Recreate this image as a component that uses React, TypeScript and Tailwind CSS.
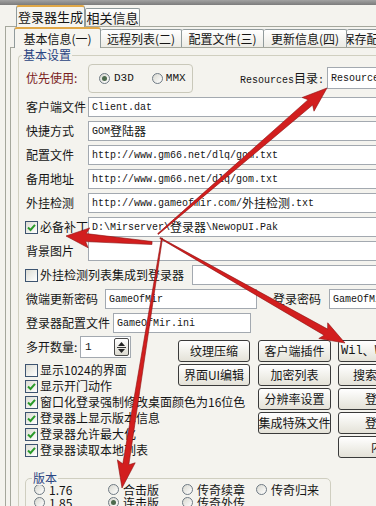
import React from "react";

const cjk = "font-['Noto_Sans_CJK_SC','Liberation_Sans',sans-serif]";
const mono = "font-['Liberation_Mono','Noto_Sans_CJK_SC',monospace]";

function OuterTab({ active, w, children }: { active?: boolean; w: string; children: React.ReactNode }) {
    return active ? (
        <div className={`${w} h-[22px] -mb-px relative z-10 flex items-center justify-center border border-b-0 border-[#919b9c] border-t-2 border-t-[#e0a848] rounded-t-[3px] bg-[#f6f5f0] text-[13px]`}>
            {children}
        </div>
    ) : (
        <div className={`${w} h-[18px] flex items-center justify-center border border-b-0 border-[#919b9c] rounded-t-[2px] bg-linear-to-b from-white to-[#ecebe5] text-[13px]`}>
            {children}
        </div>
    );
}

function InnerTab({ active, w, children }: { active?: boolean; w: string; children: React.ReactNode }) {
    return active ? (
        <div className={`${w} shrink-0 h-[21px] -mb-px relative z-10 flex items-center justify-center border border-b-0 border-[#919b9c] border-t-2 border-t-[#e0a848] rounded-t-[3px] bg-[#f6f5f0] text-[12px]`}>
            {children}
        </div>
    ) : (
        <div className={`${w} shrink-0 h-[18px] flex items-center justify-center border border-b-0 border-l-0 border-[#919b9c] rounded-t-[2px] bg-linear-to-b from-white to-[#ecebe5] text-[12px] whitespace-nowrap overflow-hidden`}>
            {children}
        </div>
    );
}

function Box({ className = "", children }: { className?: string; children?: React.ReactNode }) {
    return (
        <div className={`h-[20px] bg-white border border-[#a3a9b0] flex items-center pl-[3px] text-[10px] whitespace-nowrap overflow-hidden ${mono} ${className}`}>
            {children}
        </div>
    );
}

const Zh = ({ children }: { children: React.ReactNode }) => (
    <span className={`text-[12px] ${cjk}`}>{children}</span>
);

function Check({ on }: { on?: boolean }) {
    return (
        <span className="w-[13px] h-[13px] shrink-0 border border-[#3d5470] bg-linear-to-br from-[#dcdcd4] to-white flex items-center justify-center">
            {on && (
                <svg width="9" height="9" viewBox="0 0 9 9">
                    <path d="M1 4.5 L3.5 7 L8 1.8" fill="none" stroke="#2a9a2a" strokeWidth="2" />
                </svg>
            )}
        </span>
    );
}

function Radio({ on }: { on?: boolean }) {
    return (
        <span className="w-[11px] h-[11px] shrink-0 rounded-full border border-[#6f7a84] bg-linear-to-br from-[#d8d8d0] to-white flex items-center justify-center">
            {on && <span className="w-[5px] h-[5px] rounded-full bg-[#4d6a4d]" />}
        </span>
    );
}

function Btn({ children, className = "" }: { children: React.ReactNode; className?: string }) {
    return (
        <div className={`h-[22px] shrink-0 rounded-[3px] border border-[#3a3a3a] bg-linear-to-b from-white to-[#e4e2d8] flex items-center justify-center text-[12px] whitespace-nowrap overflow-hidden ${className}`}>
            {children}
        </div>
    );
}

function Row({ label, children }: { label: string; children: React.ReactNode }) {
    return (
        <div className="flex items-center h-[24px] pl-[7px]">
            <span className="w-[62px] shrink-0 text-[12px]">{label}</span>
            {children}
        </div>
    );
}

function arrow(x0: number, y0: number, x1: number, y1: number, w0: number, w1: number, hw: number, hl: number) {
    const dx = x1 - x0;
    const dy = y1 - y0;
    const len = Math.hypot(dx, dy);
    const ux = dx / len;
    const uy = dy / len;
    const nx = -uy;
    const ny = ux;
    const bx = x1 - ux * hl;
    const by = y1 - uy * hl;
    const wx = bx - ux * 3;
    const wy = by - uy * 3;
    const pts = [
        [x0 + (nx * w0) / 2, y0 + (ny * w0) / 2],
        [bx + (nx * w1) / 2, by + (ny * w1) / 2],
        [wx + (nx * hw) / 2, wy + (ny * hw) / 2],
        [x1, y1],
        [wx - (nx * hw) / 2, wy - (ny * hw) / 2],
        [bx - (nx * w1) / 2, by - (ny * w1) / 2],
        [x0 - (nx * w0) / 2, y0 - (ny * w0) / 2],
    ];
    return pts.map((p) => `${p[0].toFixed(1)},${p[1].toFixed(1)}`).join(" ");
}

function Arrows() {
    const list = [
        arrow(158, 234, 327, 88, 1, 7, 18, 22),
        arrow(152, 243, 66, 236, 3, 8, 20, 20),
        arrow(160, 238, 345, 343, 1, 7, 18, 22),
        arrow(162, 238, 122, 488, 1, 6, 18, 24),
    ];
    return (
        <svg className="absolute inset-0 pointer-events-none" width="376" height="506" viewBox="0 0 376 506">
            {list.map((p, i) => (
                <polygon key={i} points={p} fill="#d21e1e" stroke="#8c1010" strokeWidth="0.6" strokeLinejoin="round" />
            ))}
        </svg>
    );
}

export default function App() {
    const checks: [boolean, string][] = [
        [false, "显示1024的界面"],
        [true, "显示开门动作"],
        [true, "窗口化登录强制修改桌面颜色为16位色"],
        [true, "登录器上显示版本信息"],
        [true, "登录器允许最大化"],
        [true, "登录器读取本地列表"],
    ];

    const versions: [string, boolean][] = [
        ["1.76", false],
        ["合击版", false],
        ["传奇续章", false],
        ["传奇归来", false],
        ["1.85", false],
        ["连击版", true],
        ["传奇外传", false],
    ];

    return (
        <div className={`relative w-[376px] h-[506px] overflow-hidden bg-[#f4f3ee] text-[#151515] ${cjk}`}>
            <div className="h-[5px] bg-linear-to-b from-[#a2a2a2] to-[#7c7c7c]" />

            {/* outer tabs */}
            <div className="flex items-end h-[21px] pl-[16px]">
                <OuterTab active w="w-[69px]">登录器生成</OuterTab>
                <OuterTab w="w-[55px]">相关信息</OuterTab>
            </div>

            <div className="ml-[5px] border-l border-t border-[#a5a79c] h-full">
                {/* inner tabs */}
                <div className="flex items-end h-[20px] pl-[8px]">
                    <InnerTab active w="w-[87px]">基本信息(一)</InnerTab>
                    <InnerTab w="w-[81px]">远程列表(二)</InnerTab>
                    <InnerTab w="w-[82px]">配置文件(三)</InnerTab>
                    <InnerTab w="w-[83px]">更新信息(四)</InnerTab>
                    <InnerTab w="w-[40px]">保存配置</InnerTab>
                </div>

                <div className="ml-[4px] border-l border-t border-[#a5a79c] h-full">
                    {/* group 基本设置 */}
                    <div className="relative mt-[7px] ml-[7px] w-[420px] border-l border-t border-[#d0cfc0] rounded-tl-[4px] h-full">
                        <span className="absolute -top-[9px] left-[3px] px-[1px] bg-[#f4f3ee] text-[12px] text-[#2a4482] leading-[16px]">
                            基本设置
                        </span>

                        <div className="flex items-center h-[30px] mt-[7px] pl-[7px]">
                            <span className="w-[62px] shrink-0 text-[12px] text-[#7a1c1c]">优先使用:</span>
                            <div className="w-[105px] h-[29px] shrink-0 border border-[#c9c8ba] rounded-[4px] flex items-center pl-[10px]">
                                <Radio on />
                                <span className={`ml-[4px] text-[11px] ${mono}`}>D3D</span>
                                <span className="ml-[18px]">
                                    <Radio />
                                </span>
                                <span className={`ml-[3px] text-[11px] ${mono}`}>MMX</span>
                            </div>
                            <span className={`ml-[47px] shrink-0 text-[10px] ${mono}`}>
                                Resources<Zh>目录</Zh>:
                            </span>
                            <Box className="ml-[3px] w-[90px] h-[22px] shrink-0">Resources</Box>
                        </div>

                        <div className="mt-[2px]">
                            <Row label="客户端文件">
                                <Box className="flex-1">Client.dat</Box>
                            </Row>
                            <Row label="快捷方式">
                                <Box className="flex-1">
                                    GOM<Zh>登陆器</Zh>
                                </Box>
                            </Row>
                            <Row label="配置文件">
                                <Box className="flex-1">http://www.gm66.net/dlq/gom.txt</Box>
                            </Row>
                            <Row label="备用地址">
                                <Box className="flex-1">http://www.gm66.net/dlq/gom.txt</Box>
                            </Row>
                            <Row label="外挂检测">
                                <Box className="flex-1">
                                    http://www.gameofmir.com/<Zh>外挂检测</Zh>.txt
                                </Box>
                            </Row>
                            <div className="flex items-center h-[24px] pl-[6px]">
                                <Check on />
                                <span className="ml-[2px] w-[48px] shrink-0 text-[12px] whitespace-nowrap">必备补丁</span>
                                <Box className="flex-1">
                                    D:\Mirserver\<Zh>登录器</Zh>\NewopUI.Pak
                                </Box>
                            </div>
                            <Row label="背景图片">
                                <Box className="flex-1" />
                            </Row>
                            <div className="flex items-center h-[24px] pl-[6px]">
                                <Check />
                                <span className="ml-[2px] w-[152px] shrink-0 text-[12px] whitespace-nowrap">
                                    外挂检测列表集成到登录器
                                </span>
                                <Box className="flex-1" />
                            </div>
                            <div className="flex items-center h-[24px] pl-[7px]">
                                <span className="w-[79px] shrink-0 text-[12px]">微端更新密码</span>
                                <Box className="w-[152px] shrink-0">GameOfMir</Box>
                                <span className="ml-[16px] w-[56px] shrink-0 text-[12px]">登录密码</span>
                                <Box className="flex-1">GameOfMir</Box>
                            </div>
                            <div className="flex items-center h-[24px] pl-[7px]">
                                <span className="w-[87px] shrink-0 text-[12px]">登录器配置文件</span>
                                <Box className="w-[138px] shrink-0">GameOfMir.ini</Box>
                            </div>

                            {/* bottom: options + buttons */}
                            <div className="flex">
                                <div className="w-[159px] shrink-0">
                                    <div className="flex items-center h-[24px] pl-[7px]">
                                        <span className="w-[54px] shrink-0 text-[12px]">多开数量:</span>
                                        <div className="w-[51px] h-[22px] shrink-0 bg-white border border-[#a3a9b0] flex items-center justify-between pl-[4px] pr-[1px]">
                                            <span className={`text-[11px] ${mono}`}>1</span>
                                            <div className="w-[15px] h-[18px] border border-[#4a4a4a] rounded-[2px] bg-linear-to-b from-white to-[#dcdad0] flex flex-col items-center justify-center gap-[1px]">
                                                <svg width="7" height="4" viewBox="0 0 7 4">
                                                    <path d="M0 4 L3.5 0 L7 4 Z" fill="#222" />
                                                </svg>
                                                <div className="w-[9px] h-px bg-[#333]" />
                                                <svg width="7" height="4" viewBox="0 0 7 4">
                                                    <path d="M0 0 L3.5 4 L7 0 Z" fill="#222" />
                                                </svg>
                                            </div>
                                        </div>
                                    </div>
                                    <div className="mt-[3px] pl-[6px]">
                                        {checks.map(([on, text]) => (
                                            <div key={text} className="flex items-center gap-[2px] h-[16px] whitespace-nowrap text-[12px]">
                                                <Check on={on} />
                                                <span>{text}</span>
                                            </div>
                                        ))}
                                    </div>
                                </div>

                                <div className="flex pt-[5px]">
                                    <div className="w-[72px] flex flex-col gap-[2px]">
                                        <Btn>纹理压缩</Btn>
                                        <Btn>界面UI编辑</Btn>
                                    </div>
                                    <div className="ml-[8px] w-[73px] flex flex-col gap-[2px]">
                                        <Btn>客户端插件</Btn>
                                        <Btn>加密列表</Btn>
                                        <Btn>分辨率设置</Btn>
                                        <Btn>集成特殊文件</Btn>
                                    </div>
                                    <div className="ml-[7px] w-[90px] flex flex-col gap-[2px]">
                                        <Btn className={`justify-start pl-[2px] text-[10px] ${mono}`}>
                                            Wil<Zh>、</Zh>Wzl<Zh>打包</Zh>
                                        </Btn>
                                        <Btn>搜索客户端</Btn>
                                        <Btn>登录器</Btn>
                                        <Btn>登录框</Btn>
                                        <Btn>内挂</Btn>
                                    </div>
                                </div>
                            </div>

                            {/* 版本 */}
                            <div className="relative mt-[20px] ml-[6px] w-[306px] h-[40px] border border-[#cfcec0] rounded-[5px] pt-[4px] pl-[8px]">
                                <span className="absolute -top-[8px] left-[6px] px-[1px] bg-[#f4f3ee] text-[12px] text-[#2a4482] leading-[14px]">
                                    版本
                                </span>
                                <div className="grid grid-cols-[74px_74px_74px_74px] text-[12px] leading-[12px]">
                                    {versions.map(([t, on]) => (
                                        <div key={t} className="flex items-center gap-[4px] h-[13px]">
                                            <Radio on={on} />
                                            <span>{t}</span>
                                        </div>
                                    ))}
                                </div>
                            </div>
                        </div>
                    </div>
                </div>
            </div>

            <Arrows />
        </div>
    );
}
